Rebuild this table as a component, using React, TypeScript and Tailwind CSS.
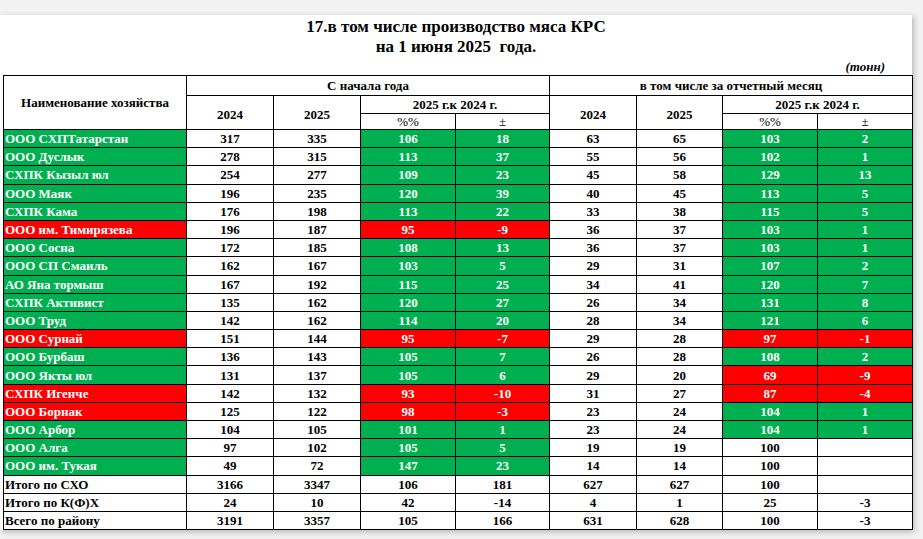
import type { ReactNode } from "react";

type Tone = "g" | "r" | "w";

type Row = {
  name: string;
  y24: string;
  y25: string;
  pct: string;
  diff: string;
  m24: string;
  m25: string;
  mPct: string;
  mDiff: string;
  tone: Tone;
  mTone: Tone;
};

const rows: Row[] = [
  { name: "ООО СХПТатарстан", y24: "317", y25: "335", pct: "106", diff: "18", m24: "63", m25: "65", mPct: "103", mDiff: "2", tone: "g", mTone: "g" },
  { name: "ООО Дуслык", y24: "278", y25: "315", pct: "113", diff: "37", m24: "55", m25: "56", mPct: "102", mDiff: "1", tone: "g", mTone: "g" },
  { name: "СХПК Кызыл юл", y24: "254", y25: "277", pct: "109", diff: "23", m24: "45", m25: "58", mPct: "129", mDiff: "13", tone: "g", mTone: "g" },
  { name: "ООО Маяк", y24: "196", y25: "235", pct: "120", diff: "39", m24: "40", m25: "45", mPct: "113", mDiff: "5", tone: "g", mTone: "g" },
  { name: "СХПК Кама", y24: "176", y25: "198", pct: "113", diff: "22", m24: "33", m25: "38", mPct: "115", mDiff: "5", tone: "g", mTone: "g" },
  { name: "ООО им. Тимирязева", y24: "196", y25: "187", pct: "95", diff: "-9", m24: "36", m25: "37", mPct: "103", mDiff: "1", tone: "r", mTone: "g" },
  { name: "ООО Сосна", y24: "172", y25: "185", pct: "108", diff: "13", m24: "36", m25: "37", mPct: "103", mDiff: "1", tone: "g", mTone: "g" },
  { name: "ООО СП Смаиль", y24: "162", y25: "167", pct: "103", diff: "5", m24: "29", m25: "31", mPct: "107", mDiff: "2", tone: "g", mTone: "g" },
  { name: "АО Яна тормыш", y24: "167", y25: "192", pct: "115", diff: "25", m24: "34", m25: "41", mPct: "120", mDiff: "7", tone: "g", mTone: "g" },
  { name: "СХПК Активист", y24: "135", y25: "162", pct: "120", diff: "27", m24: "26", m25: "34", mPct: "131", mDiff: "8", tone: "g", mTone: "g" },
  { name: "ООО Труд", y24: "142", y25: "162", pct: "114", diff: "20", m24: "28", m25: "34", mPct: "121", mDiff: "6", tone: "g", mTone: "g" },
  { name: "ООО Сурнай", y24: "151", y25: "144", pct: "95", diff: "-7", m24: "29", m25: "28", mPct: "97", mDiff: "-1", tone: "r", mTone: "r" },
  { name: "ООО Бурбаш", y24: "136", y25: "143", pct: "105", diff: "7", m24: "26", m25: "28", mPct: "108", mDiff: "2", tone: "g", mTone: "g" },
  { name: "ООО Якты юл", y24: "131", y25: "137", pct: "105", diff: "6", m24: "29", m25: "20", mPct: "69", mDiff: "-9", tone: "g", mTone: "r" },
  { name: "СХПК Игенче", y24: "142", y25: "132", pct: "93", diff: "-10", m24: "31", m25: "27", mPct: "87", mDiff: "-4", tone: "r", mTone: "r" },
  { name: "ООО Борнак", y24: "125", y25: "122", pct: "98", diff: "-3", m24: "23", m25: "24", mPct: "104", mDiff: "1", tone: "r", mTone: "g" },
  { name: "ООО Арбор", y24: "104", y25: "105", pct: "101", diff: "1", m24: "23", m25: "24", mPct: "104", mDiff: "1", tone: "g", mTone: "g" },
  { name: "ООО Алга", y24: "97", y25: "102", pct: "105", diff: "5", m24: "19", m25: "19", mPct: "100", mDiff: "", tone: "g", mTone: "w" },
  { name: "ООО им. Тукая", y24: "49", y25: "72", pct: "147", diff: "23", m24: "14", m25: "14", mPct: "100", mDiff: "", tone: "g", mTone: "w" },
  { name: "Итого по СХО", y24: "3166", y25: "3347", pct: "106", diff: "181", m24: "627", m25: "627", mPct: "100", mDiff: "", tone: "w", mTone: "w" },
  { name: "Итого по К(Ф)Х", y24: "24", y25: "10", pct: "42", diff: "-14", m24: "4", m25: "1", mPct: "25", mDiff: "-3", tone: "w", mTone: "w" },
  { name: "Всего по району", y24: "3191", y25: "3357", pct: "105", diff: "166", m24: "631", m25: "628", mPct: "100", mDiff: "-3", tone: "w", mTone: "w" },
];

const toneClass: Record<Tone, string> = {
  g: "bg-[#00b050] text-white",
  r: "bg-[#ff0000] text-white",
  w: "bg-white text-black",
};

function Cell({ tone = "w", left, children }: { tone?: Tone; left?: boolean; children: ReactNode }) {
  return (
    <td
      className={`h-[18.2px] border border-black p-0 text-[13px] font-bold leading-none ${toneClass[tone]} ${
        left ? "pl-[1px] text-left" : "text-center"
      }`}
    >
      {children}
    </td>
  );
}

export default function App() {
  return (
    <div className="h-[539px] w-full bg-[#f2f2f2] pt-[15px] font-['Liberation_Serif',serif]">
      <div className="h-[515px] w-[912px] bg-white pt-[2px] shadow-[2px_2px_6px_rgba(0,0,0,0.25)]">
        <h1 className="text-center text-[17px] font-bold leading-[20px] text-black">
          17.в том числе производство мяса КРС
          <br />
          на 1 июня 2025&nbsp; года.
        </h1>
        <div className="mt-[2px] pr-[27px] text-right text-[13px] font-bold italic leading-[16px] text-black">
          (тонн)
        </div>
        <table className="ml-[3px] w-[909px] table-fixed border-collapse border border-black">
          <colgroup>
            <col className="w-[183px]" />
            <col className="w-[87px]" />
            <col className="w-[87px]" />
            <col className="w-[95px]" />
            <col className="w-[94px]" />
            <col className="w-[87px]" />
            <col className="w-[86px]" />
            <col className="w-[95px]" />
            <col className="w-[95px]" />
          </colgroup>
          <thead className="text-black">
            <tr className="h-[20px]">
              <th rowSpan={3} className="border border-black p-0 text-[13px] font-bold leading-none">
                Наименование хозяйства
              </th>
              <th colSpan={4} className="border border-black p-0 text-[13px] font-bold leading-none">
                С начала года
              </th>
              <th colSpan={4} className="border border-black p-0 text-[13px] font-bold leading-none">
                в том числе за отчетный месяц
              </th>
            </tr>
            <tr className="h-[18px]">
              <th rowSpan={2} className="border border-black p-0 pt-[3px] text-[13px] font-bold leading-none">2024</th>
              <th rowSpan={2} className="border border-black p-0 pt-[3px] text-[13px] font-bold leading-none">2025</th>
              <th colSpan={2} className="border border-black p-0 text-[13px] font-bold leading-none">
                2025 г.к 2024 г.
              </th>
              <th rowSpan={2} className="border border-black p-0 pt-[3px] text-[13px] font-bold leading-none">2024</th>
              <th rowSpan={2} className="border border-black p-0 pt-[3px] text-[13px] font-bold leading-none">2025</th>
              <th colSpan={2} className="border border-black p-0 text-[13px] font-bold leading-none">
                2025 г.к 2024 г.
              </th>
            </tr>
            <tr className="h-[16px]">
              <th className="border border-black p-0 text-[13px] font-normal leading-none">%%</th>
              <th className="border border-black p-0 text-[13px] font-normal leading-none">±</th>
              <th className="border border-black p-0 text-[13px] font-normal leading-none">%%</th>
              <th className="border border-black p-0 text-[13px] font-normal leading-none">±</th>
            </tr>
          </thead>
          <tbody>
            {rows.map((row) => (
              <tr key={row.name}>
                <Cell tone={row.tone} left>
                  {row.name}
                </Cell>
                <Cell>{row.y24}</Cell>
                <Cell>{row.y25}</Cell>
                <Cell tone={row.tone}>{row.pct}</Cell>
                <Cell tone={row.tone}>{row.diff}</Cell>
                <Cell>{row.m24}</Cell>
                <Cell>{row.m25}</Cell>
                <Cell tone={row.mTone}>{row.mPct}</Cell>
                <Cell tone={row.mTone}>{row.mDiff}</Cell>
              </tr>
            ))}
          </tbody>
        </table>
      </div>
    </div>
  );
}
